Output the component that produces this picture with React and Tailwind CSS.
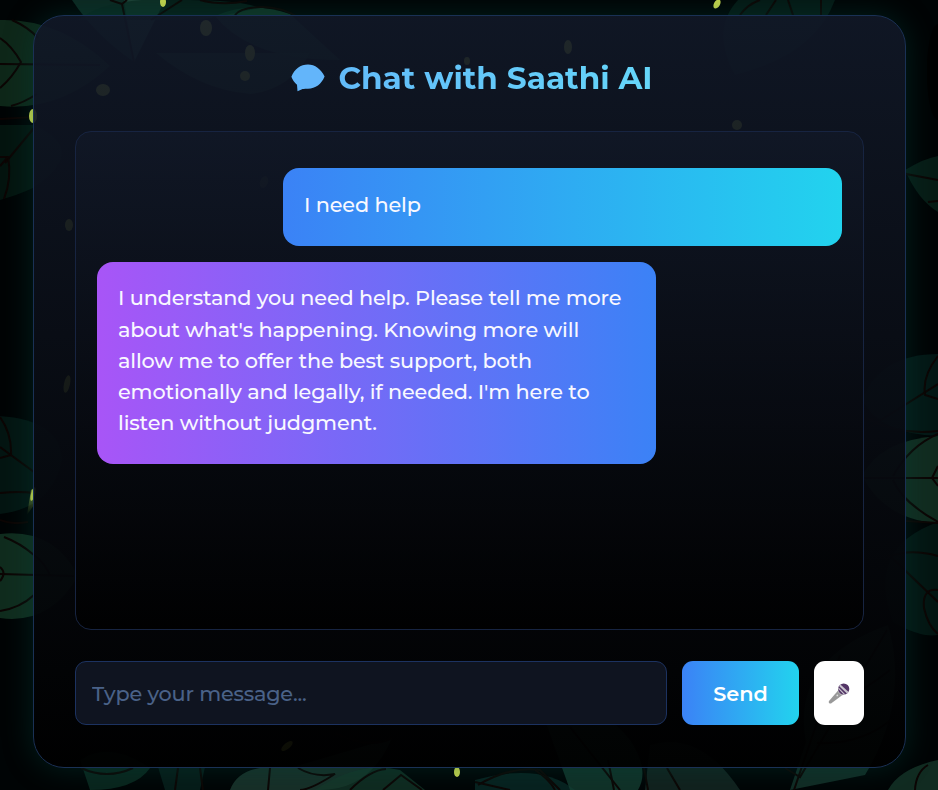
import React from "react";

const leaves = [
  { d: "M72 0 L165 0 L134 62 Q95 35 72 0Z", fill: "#10362c" },
  { d: "M124 0 L165 0 L134 62Z", fill: "#234a3c" },
  { d: "M0 20 Q60 18 110 66 Q60 112 0 106Z", fill: "#143421" },
  { d: "M156 53 L310 53 Q290 90 250 94 Q200 90 156 53Z", fill: "#1d4534" },
  { d: "M215 16 Q250 0 290 14 L340 60 Q250 60 215 16Z", fill: "#16412f" },
  { d: "M78 20 Q110 -5 190 0 Q240 0 260 8 L200 20Z", fill: "#08261f" },
  { d: "M0 125 L34 125 Q90 150 33 188 Q18 195 0 200Z", fill: "#051a14" },
  { d: "M738 0 L835 0 Q815 55 735 75 Q710 30 738 0Z", fill: "#07201b" },
  { d: "M905 170 Q925 158 938 156 L938 212 Q918 200 905 170Z", fill: "#0a241c" },
  { d: "M0 416 Q60 420 62 460 Q52 508 0 514Z", fill: "#051c17" },
  { d: "M0 534 Q54 528 78 576 Q50 625 0 618Z", fill: "#163c28" },
  { d: "M938 354 Q880 354 862 400 Q880 434 938 436Z", fill: "#061f1c" },
  { d: "M938 436 Q880 440 862 476 Q885 520 938 523Z", fill: "#173a29" },
  { d: "M938 522 Q865 548 893 622 Q920 638 938 635Z", fill: "#061c18" },
  { d: "M888 625 Q790 660 806 742 L790 790 L865 775 Q910 700 888 625Z", fill: "#183a30" },
  { d: "M230 790 Q240 762 290 768 L392 738 Q370 790 320 790Z", fill: "#203f35" },
  { d: "M315 790 Q360 760 400 770 L425 790Z", fill: "#153829" },
  { d: "M475 780 Q540 762 575 790 L475 790Z", fill: "#0a2b28" },
  { d: "M545 720 Q590 690 630 740 Q650 770 638 790 L570 790Z", fill: "#164134" },
  { d: "M645 790 L650 745 Q700 730 740 790Z", fill: "#182b27" },
  { d: "M888 790 Q900 768 938 760 L938 790Z", fill: "#173a2c" },
  { d: "M80 760 Q110 740 150 768 Q135 790 90 790Z", fill: "#0d3026" },
  { d: "M158 767 L205 767 L200 790 L165 790Z", fill: "#08231f" },
];

const veins = [
  "M0 64 L100 65", "M0 38 Q12 46 21 62 Q12 78 0 88", "M12 20 Q28 27 38 38", "M11 106 Q23 103 37 94",
  "M110 0 L122 4 L134 62", "M122 4 L127 0", "M151 20 L182 0", "M200 0 Q222 6 247 1",
  "M235 15 Q240 8 260 7 Q280 6 300 18", "M0 119 L34 117", "M5 163 L34 128", "M0 157 L8 157 Q12 178 4 199", "M0 166 L8 157",
  "M740 15 Q748 4 760 0", "M776 0 L766 15", "M788 0 L793 15", "M821 0 L821 15", "M906 174 L938 180", "M928 202 L938 201",
  "M0 417 Q12 434 11 455 L0 458", "M0 447 L34 472", "M0 493 Q20 491 34 493", "M0 520 Q12 525 28 522", "M0 574 L74 576",
  "M0 567 Q7 573 0 581", "M4 537 Q20 543 34 555 Q46 564 50 576", "M0 611 Q20 608 34 595",
  "M938 356 Q922 376 925 395 L938 399", "M865 430 L938 384", "M866 418 Q900 436 938 431", "M938 434 Q910 446 893 476", "M862 478 L938 478",
  "M938 466 L932 478 L938 486", "M893 480 Q902 502 938 522", "M888 557 Q910 548 938 556", "M890 556 L938 602", "M938 590 Q922 588 924 608 Q928 626 938 634",
  "M906 521 L938 523", "M840 655 L794 790", "M887 630 L800 777 L785 768", "M817 743 Q860 745 891 720", "M843 699 Q865 690 890 670",
  "M81 768 Q107 780 133 768", "M178 768 L175 790", "M200 768 L203 790", "M270 768 L268 790", "M298 768 Q315 778 335 774 Q310 790 300 790",
  "M350 790 Q370 770 386 769", "M383 790 L401 775 L422 790", "M335 733 Q370 750 392 738", "M478 785 Q510 766 540 770 L560 790", "M475 782 L510 790",
  "M535 770 Q550 780 555 790", "M570 727 L620 790", "M608 760 L614 790", "M644 768 L648 790", "M667 768 L680 790", "M915 790 Q916 772 928 765",
];

const fireflies = [
  [163, 2, 3, 5, 0], [33, 116, 4, 7, 0], [33, 494, 2, 7, 15], [717, 4, 3, 5, 30], [457, 772, 3, 5, 0],
  [206, 28, 6, 8, 0], [250, 53, 5, 8, 0], [245, 76, 5, 5, 0], [103, 90, 7, 6, 0], [69, 225, 4, 6, 0],
  [568, 47, 4, 7, 0], [467, 61, 3, 4, 0], [737, 125, 5, 5, 0], [67, 384, 3, 9, 12], [287, 746, 3, 7, 50],
  [264, 182, 4, 6, 20],
];

function JungleBackdrop() {
  return (
    <svg className="absolute inset-0 h-full w-full" viewBox="0 0 938 790" aria-hidden="true">
      <defs>
        <linearGradient id="trail" x1="0" y1="1" x2="0" y2="0">
          <stop offset="0" stopColor="#c6d64c" stopOpacity="0" />
          <stop offset="1" stopColor="#c6d64c" stopOpacity=".6" />
        </linearGradient>
      </defs>
      <rect width="938" height="790" fill="#000405" />
      {leaves.map((l) => <path key={l.d} d={l.d} fill={l.fill} opacity="0.72" />)}
      <g fill="none" stroke="#0c0504" strokeWidth="2">
        {veins.map((d) => <path key={d} d={d} />)}
      </g>
      <ellipse cx="938" cy="72" rx="11" ry="48" fill="#000" />
      <path d="M27 515 L31 490 L35 488 L34 505Z" fill="url(#trail)" />
      {fireflies.map(([x, y, rx, ry, r]) => (
        <ellipse key={`${x}-${y}`} cx={x} cy={y} rx={rx} ry={ry} fill="#c6d64c" transform={`rotate(${r} ${x} ${y})`} />
      ))}
    </svg>
  );
}

function BubbleIcon() {
  return (
    <svg className="mr-[13px] h-[28px] w-[34px] shrink-0" viewBox="0 0 34 28" aria-hidden="true">
      <path d="M17 0.5C24 .5 30 5 33.6 12.5C30.5 20 24.5 24.7 17 24.7C14.5 24.7 12 24.6 10.5 25.5L6.5 27.2L6 20.7C3.5 18.5 1.2 15.5.4 12.7C3.5 5 9.5.5 17 .5Z" fill="#63b5fa" />
    </svg>
  );
}

function Microphone() {
  return (
    <svg className="h-[22px] w-[22px] translate-y-px" viewBox="0 0 22 22" aria-hidden="true">
      <path d="M10.3 7.2L14.8 11.7L3 20.5Q1.7 20.8.9 19.7Q.5 18.9 1 18Z" fill="#999" />
      <path d="M9.8 8.7L11 6.2L16 11.3L13.5 12.7Z" fill="#bebebe" />
      <circle cx="15.7" cy="6" r="5.6" fill="#533566" />
      <path d="M11 3L12.4 1.5L20.6 9L19 10.6Z" fill="#c9c4ce" />
      <path d="M10.4 4.3L17.1 11.2L15.8 11.4L10.2 5.8Z" fill="#c9c4ce" />
      <circle cx="9.3" cy="12.4" r=".9" fill="#ddd" />
    </svg>
  );
}

export default function App() {
  return (
    <main className="relative h-[790px] w-[938px] overflow-hidden bg-black pt-[15px] pl-[33px] font-['Montserrat','Inter',sans-serif]">
      <JungleBackdrop />
      <section className="relative flex h-[753px] w-[873px] flex-col rounded-[31px] border border-[#1a3155] bg-linear-to-b/srgb from-[#111827]/92 to-black/94 px-[41px] shadow-[0_0_30px_rgba(0,80,68,0.36)]">
        <h1 className="mt-[42px] flex h-[40px] items-center justify-center bg-linear-to-r/srgb from-[#60a5fa] to-[#67e8f9] bg-clip-text pl-[5px] text-[31.2px] font-bold whitespace-nowrap text-transparent">
          <BubbleIcon />
          <span>Chat with Saathi AI</span>
        </h1>
        <div className="mt-[33px] flex h-[499px] w-[789px] flex-col rounded-[16px] border border-[#172441] bg-linear-to-b/srgb from-[#111827]/80 to-black/80 px-[21px] pt-[36px] text-[20.8px] leading-[31.2px] font-medium tracking-[-0.15px] text-[#f8f8ff]">
          <div className="h-[78px] w-[559px] self-end rounded-[16px] bg-linear-to-r/srgb from-[#3b82f6] to-[#22d3ee] px-[21px] pt-[20.8px]">
            I need help
          </div>
          <div className="mt-4 h-[202px] w-[559px] rounded-[16px] bg-linear-to-r/srgb from-[#a855f7] to-[#3b82f6] px-[21px] pt-[20.4px]">
            I understand you need help. Please tell me more about what's happening. Knowing more will allow me to offer the best support, both emotionally and legally, if needed. I'm here to listen without judgment.
          </div>
        </div>
        <form className="mt-[31px] flex h-[64px] w-[789px] gap-[15px]">
          <input
            className="h-full w-[592px] rounded-[11px] border border-[#1c3260] bg-[#0f1420] px-4 text-[20.8px] font-medium tracking-[-0.19px] text-white placeholder:text-[#4a6288]"
            placeholder="Type your message..."
          />
          <button type="button" className="w-[117px] rounded-[11px] bg-linear-to-r/srgb from-[#3b82f6] to-[#22d3ee] pt-px text-[20.8px] font-semibold text-white">Send</button>
          <button type="button" aria-label="Voice input" className="flex w-[50px] items-center justify-center rounded-[11px] bg-white"><Microphone /></button>
        </form>
      </section>
    </main>
  );
}
